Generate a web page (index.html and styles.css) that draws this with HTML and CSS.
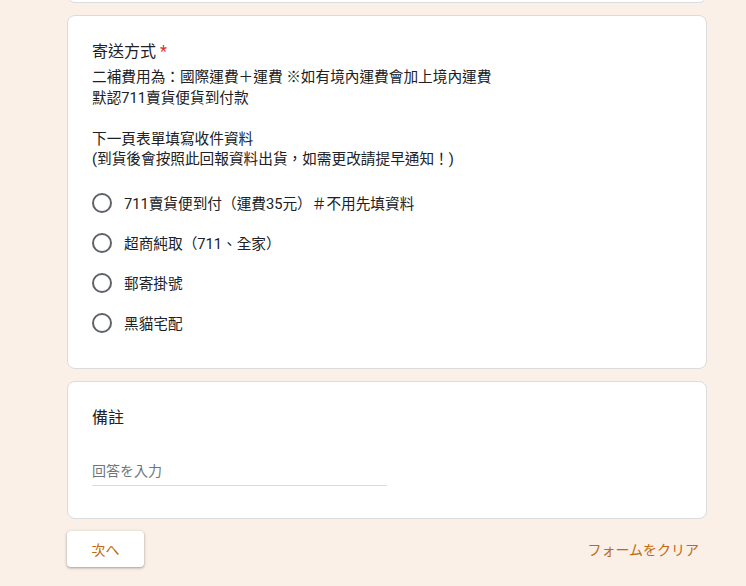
FILE: index.html
```html
<!DOCTYPE html>
<html lang="zh-Hant">
<head>
  <meta charset="UTF-8" />
  <meta name="viewport" content="width=device-width, initial-scale=1.0"/>
  <title>寄送方式</title>
  <link rel="stylesheet" href="styles.css">
</head>
<body>

  <div class="form-wrap">

    <!-- previous question (scrolled off) -->
    <div class="card card-prev"></div>

    <!-- SHIPPING -->
    <div class="card card-choice">
      <div class="q-title">寄送方式<span class="required"> *</span></div>
      <div class="q-desc">
        二補費用為：國際運費＋運費 ※如有境內運費會加上境內運費<br>
        默認711賣貨便貨到付款<br>
        <br>
        下一頁表單填寫收件資料<br>
        (到貨後會按照此回報資料出貨，如需更改請提早通知！)
      </div>
      <div class="options">
        <label class="option"><span class="radio"></span>711賣貨便到付（運費35元）＃不用先填資料</label>
        <label class="option"><span class="radio"></span>超商純取（711、全家）</label>
        <label class="option"><span class="radio"></span>郵寄掛號</label>
        <label class="option"><span class="radio"></span>黑貓宅配</label>
      </div>
    </div>

    <!-- NOTES -->
    <div class="card">
      <div class="q-title">備註</div>
      <div class="answer">回答を入力</div>
    </div>

    <!-- FOOTER -->
    <div class="form-footer">
      <button class="btn-next">次へ</button>
      <a href="#" class="btn-clear">フォームをクリア</a>
    </div>

  </div>

</body>
</html>
```

FILE: styles.css
```css
* {
  box-sizing: border-box;
}

body {
  font-family: Roboto, "Noto Sans CJK TC", sans-serif;
  background-color: #faf0e7;
  color: #202124;
  margin: 0;
  padding: 0;
}

/* ===== LAYOUT ===== */
.form-wrap {
  width: 640px;
  margin-left: 67px;
  display: flex;
  flex-direction: column;
  gap: 12px;
}

.card {
  background-color: white;
  border: 1px solid #dadce0;
  border-radius: 8px;
  padding: 24px;
}

.card-prev {
  height: 23px;
  margin-top: -20px;
  padding: 0;
}

.card-choice {
  padding-bottom: 25px;
}

/* ===== QUESTION ===== */
.q-title {
  font-size: 16px;
  line-height: 24px;
}

.required {
  color: #d93025;
}

.q-desc {
  font-size: 11pt;
  line-height: 20.5px;
  margin-top: 3px;
}

.options {
  margin-top: 13px;
}

.option {
  display: flex;
  align-items: center;
  gap: 12px;
  height: 40px;
  font-size: 11pt;
  cursor: pointer;
}

.radio {
  width: 20px;
  height: 20px;
  border: 2px solid #5f6368;
  border-radius: 50%;
  flex-shrink: 0;
}

/* ===== TEXT ANSWER ===== */
.answer {
  width: 295px;
  margin-top: 31px;
  margin-bottom: 8px;
  padding-bottom: 4px;
  font-size: 14px;
  line-height: 20px;
  color: #70757a;
  border-bottom: 1px solid #dadce0;
}

/* ===== FOOTER ===== */
.form-footer {
  display: flex;
  justify-content: space-between;
  align-items: center;
  padding-bottom: 20px;
}

.btn-next {
  width: 77px;
  height: 36px;
  background-color: white;
  color: #bf6a11;
  font-family: inherit;
  font-size: 14px;
  border: none;
  border-radius: 4px;
  box-shadow: 0 1px 2px rgba(60, 64, 67, 0.3), 0 1px 3px 1px rgba(60, 64, 67, 0.15);
  cursor: pointer;
}

.btn-clear {
  color: #bf6a11;
  font-size: 14px;
  text-decoration: none;
  padding: 8px;
}
```
